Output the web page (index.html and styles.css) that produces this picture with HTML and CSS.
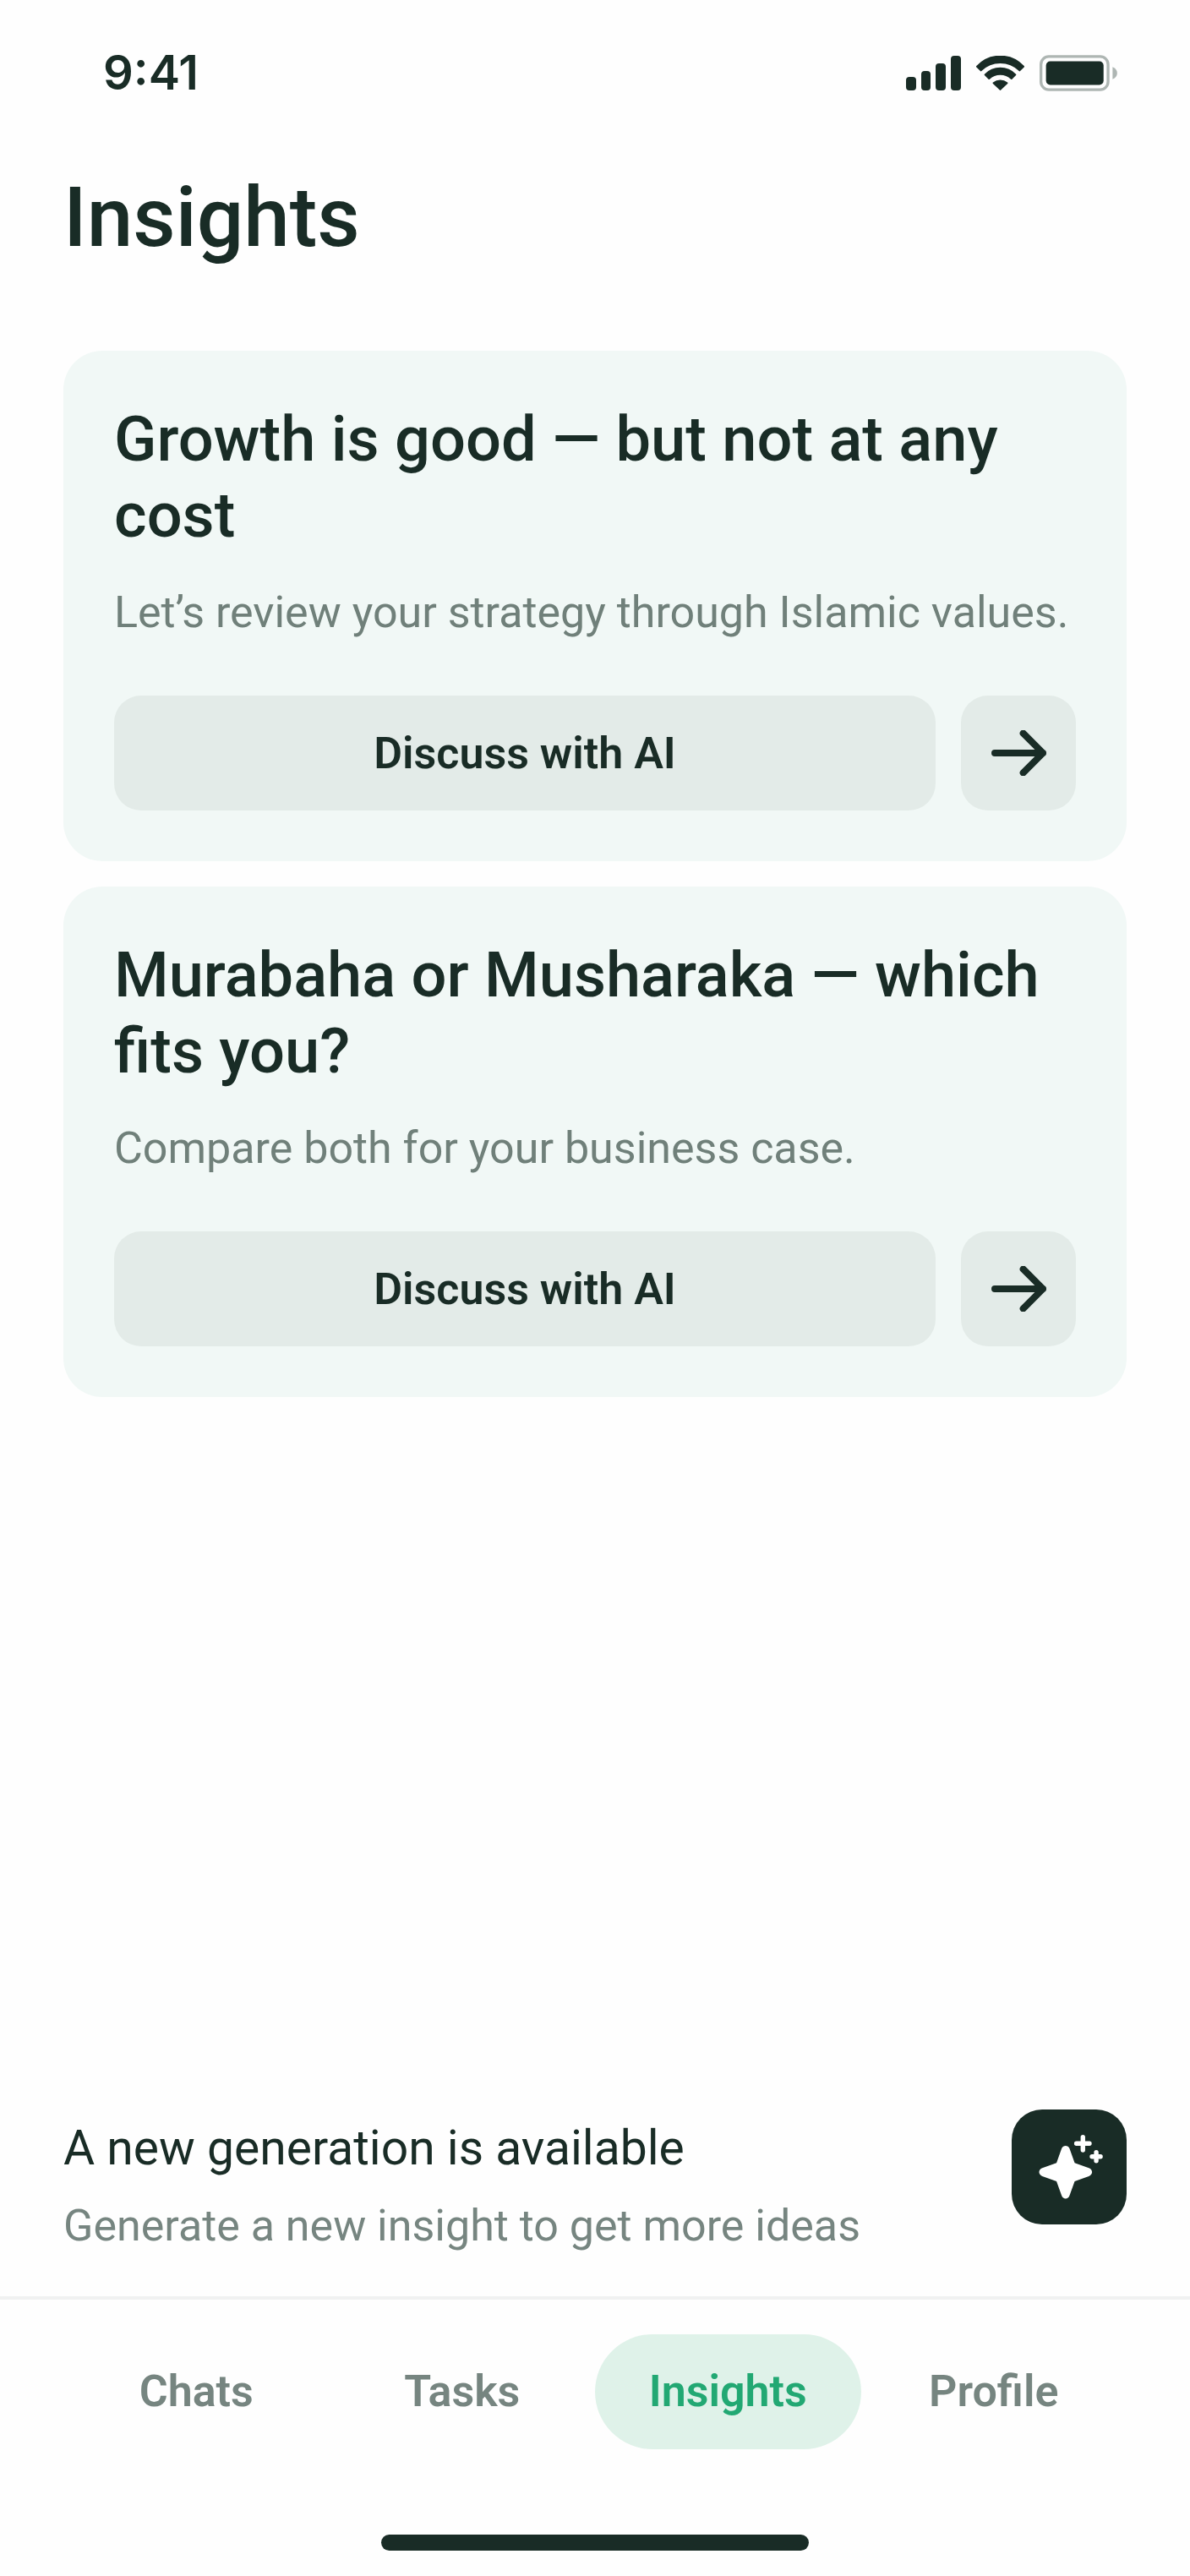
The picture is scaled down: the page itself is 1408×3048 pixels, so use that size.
FILE: index.html
```html
<!DOCTYPE html>
<html lang="en">
<head>
    <meta charset="UTF-8">
    <meta name="viewport" content="width=device-width, initial-scale=1.0">
    <title>Insights</title>
    <link rel="stylesheet" href="styles.css">
</head>
<body>

<div class="screen">
    <div class="status-bar">
        <span class="time">9:41</span>
        <div class="status-icons">
            <svg width="65" height="41" viewBox="0 0 65 41" fill="currentColor" aria-hidden="true">
                <rect x="0" y="25" width="12" height="16" rx="4"/>
                <rect x="18" y="18" width="11" height="23" rx="4"/>
                <rect x="35" y="9" width="12" height="32" rx="4"/>
                <rect x="53" y="0" width="12" height="41" rx="4"/>
            </svg>
            <svg width="57" height="41" viewBox="0 0 172 123" fill="currentColor" stroke="currentColor" stroke-width="6" stroke-linejoin="round" aria-hidden="true">
                <path d="M3 38A113 113 0 0 1 169 38L155 52A99 99 0 0 0 17 52Z"/>
                <path d="M32 67A75 75 0 0 1 140 67L126 81A58 58 0 0 0 46 81Z"/>
                <path d="M62 97A39 39 0 0 1 110 97L86 120Z"/>
            </svg>
            <svg width="92" height="43" viewBox="0 0 277 128" aria-hidden="true">
                <rect class="battery-case" x="5" y="5" width="239" height="118" rx="28"/>
                <rect x="23" y="22" width="205" height="84" rx="15" fill="currentColor"/>
                <path class="battery-cap" d="M260 42C282 50 282 78 260 86Z"/>
            </svg>
        </div>
    </div>

    <h1>Insights</h1>

    <main class="cards">
        <section class="card">
            <h2>Growth is good — but not at any cost</h2>
            <p>Let’s review your strategy through Islamic values.</p>
            <div class="actions">
                <button class="discuss">Discuss with AI</button>
                <button class="open" aria-label="Open insight">
                    <svg width="65" height="54" viewBox="0 0 195 162" aria-hidden="true">
                        <path d="M12 81H183M113 11L183 81L113 151"/>
                    </svg>
                </button>
            </div>
        </section>

        <section class="card">
            <h2>Murabaha or Musharaka — which fits you?</h2>
            <p>Compare both for your business case.</p>
            <div class="actions">
                <button class="discuss">Discuss with AI</button>
                <button class="open" aria-label="Open insight">
                    <svg width="65" height="54" viewBox="0 0 195 162" aria-hidden="true">
                        <path d="M12 81H183M113 11L183 81L113 151"/>
                    </svg>
                </button>
            </div>
        </section>
    </main>

    <div class="generate">
        <div class="generate-text">
            <p class="generate-title">A new generation is available</p>
            <p class="generate-hint">Generate a new insight to get more ideas</p>
        </div>
        <button class="generate-button" aria-label="Generate insight">
            <svg viewBox="0 0 405 405" aria-hidden="true">
                <path fill="#fff" d="M176 138C180 125 200 125 204 138L222 188L272 206C287 211 287 230 272 235L222 253L204 303C199 318 181 318 176 303L158 253L108 235C93 230 93 211 108 206L158 188Z"/>
                <path stroke="#fff" stroke-width="16" stroke-linecap="round" d="M251 97V143M228 120H274M298 151V181M283 166H313"/>
            </svg>
        </button>
    </div>

    <nav class="tabs">
        <a href="#chats">Chats</a>
        <a href="#tasks">Tasks</a>
        <a href="#insights" class="active" aria-current="page">Insights</a>
        <a href="#profile">Profile</a>
    </nav>

    <div class="home-indicator"></div>
</div>

</body>
</html>
```
FILE: styles.css
```css
* {
    box-sizing: border-box;
}

body {
    margin: 0;
    background-color: #fefefe;
    color: #192c26;
    font-family: Roboto, "Liberation Sans", sans-serif;
}

h1, h2, p {
    margin: 0;
    font-weight: 500;
}

button {
    border: none;
    padding: 0;
    color: inherit;
    font-family: inherit;
    cursor: pointer;
}

.screen {
    display: flex;
    flex-direction: column;
    min-height: 100vh;
}

.status-bar {
    display: flex;
    justify-content: space-between;
    align-items: center;
    height: 172px;
    padding: 0 86px 0 122px;
}

.time {
    font-family: Inter, sans-serif;
    font-size: 56px;
    font-weight: 600;
}

.status-icons {
    display: flex;
    align-items: center;
    gap: 18px;
}

.battery-case {
    fill: none;
    stroke: #aeb6b3;
    stroke-width: 10;
}

.battery-cap {
    fill: #aeb6b3;
}

h1 {
    padding: 26px 75px 0;
    font-size: 98px;
    line-height: 120px;
}

.cards {
    display: flex;
    flex-direction: column;
    flex: 1;
    gap: 30px;
    padding: 97px 75px 30px;
}

.card {
    padding: 60px;
    border-radius: 46px;
    background-color: #f1f8f6;
}

.card h2 {
    font-size: 74px;
    line-height: 90px;
}

.card p {
    margin: 30px 0 58px;
    color: #70807a;
    font-size: 52px;
    font-weight: 400;
    line-height: 80px;
}

.actions {
    display: flex;
    gap: 30px;
}

.actions button {
    height: 136px;
    border-radius: 32px;
    background-color: #e3ebe8;
}

.actions .discuss {
    flex: 1;
    font-size: 52px;
    font-weight: 600;
}

.actions .open {
    display: flex;
    justify-content: center;
    align-items: center;
    width: 136px;
}

.open path {
    fill: none;
    stroke: currentColor;
    stroke-width: 24;
    stroke-linecap: round;
    stroke-linejoin: round;
}

.generate {
    display: flex;
    justify-content: space-between;
    align-items: flex-start;
    padding: 0 75px 37px;
}

.generate p {
    font-weight: 400;
    line-height: 92px;
}

.generate-title {
    font-size: 57px;
}

.generate-hint {
    color: #768580;
    font-size: 52px;
}

.generate-button {
    width: 136px;
    height: 136px;
    border-radius: 36px;
    background-color: #192c26;
}

.generate-button svg {
    display: block;
}

.tabs {
    display: flex;
    padding: 41px 75px 0;
    border-top: 4px solid #f0f1f1;
}

.tabs a {
    flex: 1;
    border-radius: 68px;
    color: #768580;
    font-size: 52px;
    font-weight: 600;
    line-height: 136px;
    text-align: center;
    text-decoration: none;
}

.tabs .active {
    background-color: #dff2e9;
    color: #22a873;
}

.home-indicator {
    width: 36%;
    height: 19px;
    margin: 101px auto 30px;
    border-radius: 10px;
    background-color: #192c26;
}
```
